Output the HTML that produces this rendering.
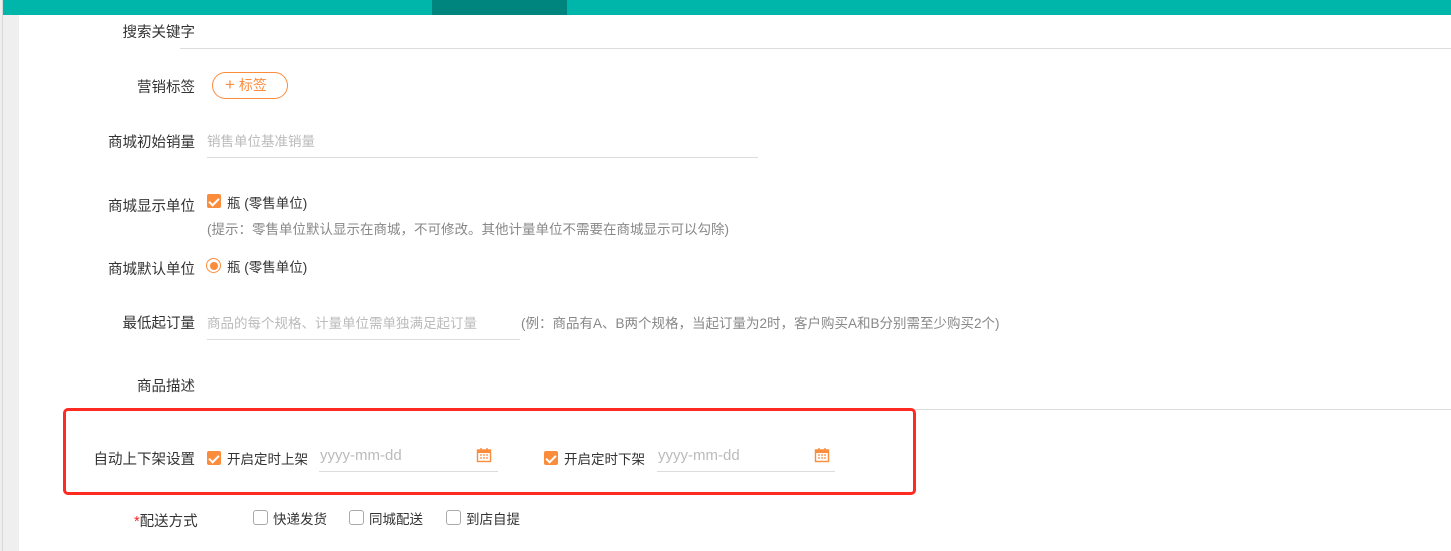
<!DOCTYPE html>
<html><head><meta charset="utf-8"><style>
*{margin:0;padding:0;box-sizing:border-box}
body{width:1451px;height:551px;background:#fff;position:relative;overflow:hidden;font-family:"Liberation Sans","Noto Sans CJK SC",sans-serif;font-size:13.5px;color:#333}
.a{position:absolute;white-space:nowrap}
.lbl{position:absolute;right:1256px;white-space:nowrap;color:#333;font-size:14.5px}
.line{position:absolute;height:1px;background:#dcdcdc}
.cb{position:absolute;width:14px;height:14px;border-radius:2px;background:#fb8c3c}
.cb:after{content:"";position:absolute;left:4px;top:1.5px;width:4px;height:8px;border:solid #fff;border-width:0 2px 2px 0;transform:rotate(45deg)}
.ucb{position:absolute;width:15px;height:15px;border:1px solid #aaa;border-radius:3px;background:#fff}
.ph{color:#bbb}
.g{color:#888}
</style></head><body>
<div class="a" style="left:0;top:0;width:19px;height:551px;background:#efefef"></div>
<div class="a" style="left:2px;top:0;width:1px;height:551px;background:#d8d8d8"></div>
<div class="a" style="left:3px;top:0;width:1448px;height:15px;background:#00b6aa"></div>
<div class="a" style="left:432px;top:0;width:135px;height:15px;background:#00857e"></div>

<div class="lbl" style="top:21px">搜索关键字</div>
<div class="line" style="left:180px;top:48px;width:1271px"></div>

<div class="lbl" style="top:76px">营销标签</div>
<div class="a" style="left:212px;top:72px;width:76px;height:27px;border:1px solid #fb8c3c;border-radius:14px;color:#fb8c3c;line-height:24px;padding-left:12px;font-size:14px"><span style="font-size:17px">+</span> 标签</div>

<div class="lbl" style="top:131px">商城初始销量</div>
<div class="a ph" style="left:207px;top:130px">销售单位基准销量</div>
<div class="line" style="left:207px;top:157px;width:551px"></div>

<div class="lbl" style="top:195px">商城显示单位</div>
<div class="cb" style="left:207px;top:194px"></div>
<div class="a" style="left:227px;top:192px">瓶 (零售单位)</div>
<div class="a g" style="left:207px;top:218px">(提示：零售单位默认显示在商城，不可修改。其他计量单位不需要在商城显示可以勾除)</div>

<div class="lbl" style="top:258px">商城默认单位</div>
<div class="a" style="left:206px;top:258px;width:15px;height:15px;border:1px solid #fb8c3c;border-radius:50%"></div>
<div class="a" style="left:209.5px;top:261.5px;width:8px;height:8px;background:#fb8c3c;border-radius:50%"></div>
<div class="a" style="left:227px;top:256px">瓶 (零售单位)</div>

<div class="lbl" style="top:312px">最低起订量</div>
<div class="a ph" style="left:207px;top:312px">商品的每个规格、计量单位需单独满足起订量</div>
<div class="line" style="left:207px;top:339px;width:313px"></div>
<div class="a g" style="left:521px;top:312px">(例：商品有A、B两个规格，当起订量为2时，客户购买A和B分别需至少购买2个)</div>

<div class="lbl" style="top:375px">商品描述</div>
<div class="line" style="left:195px;top:409px;width:1256px"></div>

<div class="a" style="left:63px;top:408px;width:853px;height:87px;border:3px solid #ff2a22;border-radius:5px"></div>
<div class="lbl" style="top:448px">自动上下架设置</div>
<div class="cb" style="left:207px;top:451px"></div>
<div class="a" style="left:227px;top:448px">开启定时上架</div>
<div class="a ph" style="left:320px;top:447px;font-size:15px">yyyy-mm-dd</div>
<div class="line" style="left:319px;top:471px;width:179px"></div>
<div class="cb" style="left:544px;top:451px"></div>
<div class="a" style="left:564px;top:448px">开启定时下架</div>
<div class="a ph" style="left:658px;top:447px;font-size:15px">yyyy-mm-dd</div>
<div class="line" style="left:657px;top:471px;width:178px"></div>
<svg class="a" style="left:476px;top:447px" width="16" height="16" viewBox="0 0 16 16"><rect x="1.5" y="3" width="13" height="11.5" fill="none" stroke="#fb8c3c" stroke-width="1.4"/><rect x="1.5" y="3" width="13" height="3" fill="#fb8c3c"/><path d="M5 1v3M11 1v3" stroke="#fb8c3c" stroke-width="1.4"/><path d="M4 8h2M7 8h2M10 8h2M4 11h2M7 11h2M10 11h2" stroke="#fb8c3c" stroke-width="1.3"/></svg>
<svg class="a" style="left:814px;top:447px" width="16" height="16" viewBox="0 0 16 16"><rect x="1.5" y="3" width="13" height="11.5" fill="none" stroke="#fb8c3c" stroke-width="1.4"/><rect x="1.5" y="3" width="13" height="3" fill="#fb8c3c"/><path d="M5 1v3M11 1v3" stroke="#fb8c3c" stroke-width="1.4"/><path d="M4 8h2M7 8h2M10 8h2M4 11h2M7 11h2M10 11h2" stroke="#fb8c3c" stroke-width="1.3"/></svg>

<div class="a" style="left:134px;top:510px;font-size:14.5px"><span style="color:#f22">*</span>配送方式</div>
<div class="ucb" style="left:253px;top:510px"></div>
<div class="a" style="left:273px;top:508px">快递发货</div>
<div class="ucb" style="left:349px;top:510px"></div>
<div class="a" style="left:369px;top:508px">同城配送</div>
<div class="ucb" style="left:446px;top:510px"></div>
<div class="a" style="left:466px;top:508px">到店自提</div>
</body></html>
